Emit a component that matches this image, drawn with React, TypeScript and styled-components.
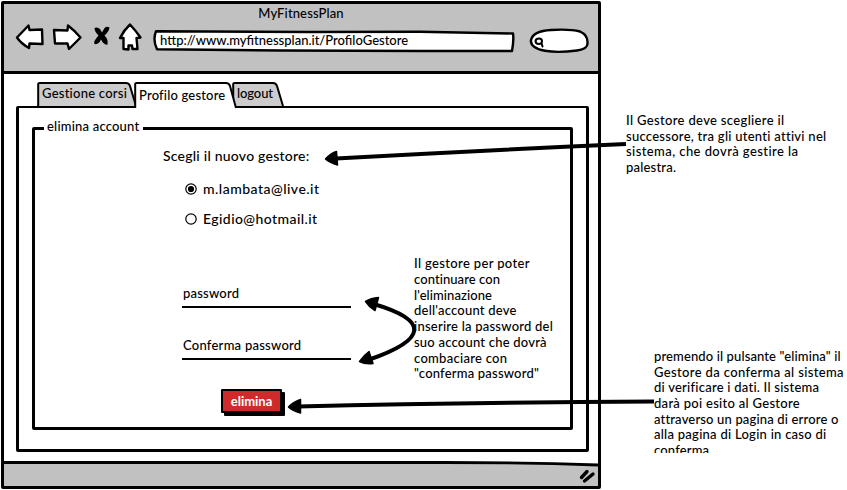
import React from "react";
import styled, { createGlobalStyle } from "styled-components";

const GlobalStyle = createGlobalStyle`
  * { box-sizing: border-box; }
  body { margin: 0; background: #fff; color: #000; font-family: Lato, "Open Sans", sans-serif; }
`;

const Page = styled.div`
  position: relative;
  display: flex;
  width: 847px;
  height: 490px;
  overflow: hidden;
`;

const Text = styled.span<{ $track?: number; $size?: number }>`
  display: block;
  white-space: nowrap;
  font-size: ${(p) => p.$size ?? 13}px;
  font-weight: 500;
  line-height: 16px;
  letter-spacing: ${(p) => p.$track ?? 0}px;
`;

const BrowserWindow = styled.main`
  display: flex;
  flex-direction: column;
  flex: none;
  width: 600px;
  height: 488px;
  margin: 1px 0 0 1px;
  border: 3px solid #000;
  border-radius: 2px;
`;

const Chrome = styled.header`
  flex: none;
  height: 70px;
  background: #c1c1c1;
  border-bottom: 3px solid #000;
`;

const TitleRow = styled.div`
  display: flex;
  justify-content: center;
  height: 18px;
  padding-top: 1px;
`;

const Toolbar = styled.div`
  display: flex;
  height: 36px;
  padding-left: 9px;
`;

const NavIcons = styled.svg`
  flex: none;
  width: 134px;
  height: 36px;
`;

const Shape = styled.svg`
  position: absolute;
  inset: 0;
  width: 100%;
  height: 100%;
  overflow: visible;
`;

const AddressBar = styled.div`
  position: relative;
  flex: none;
  width: 362px;
  height: 22px;
  margin-top: 8px;
  margin-left: 6px;
  padding: 2px 0 0 7px;
  > span { position: relative; }
`;

const SearchBox = styled.svg`
  flex: none;
  width: 62px;
  height: 27px;
  margin: 6px 0 0 13px;
`;

const Content = styled.div`
  flex: 1;
  display: flex;
  flex-direction: column;
  padding: 8px 9px 9px 12px;
`;

const TabRow = styled.nav`
  position: relative;
  z-index: 1;
  display: flex;
  flex: none;
  height: 24px;
  padding-left: 21px;
`;

const TabBox = styled.div<{ $width: number; $pad: number; $top: number; $overlap?: number; $active?: boolean }>`
  position: relative;
  z-index: ${(p) => (p.$active ? 2 : 1)};
  flex: none;
  width: ${(p) => p.$width}px;
  height: ${(p) => (p.$active ? 26 : 24)}px;
  margin-left: -${(p) => p.$overlap ?? 0}px;
  padding: ${(p) => p.$top}px 0 0 ${(p) => p.$pad}px;
  > span { position: relative; }
`;

const Panel = styled.section`
  flex: 1;
  border: solid #000;
  border-width: 2px 3px 3px 3px;
  border-radius: 2px;
  padding: 19px 13px 19px 13px;
`;

const Group = styled.section`
  position: relative;
  display: flex;
  height: 100%;
  border: solid #000;
  border-width: 3px 3px 3px 3px;
  border-radius: 2px;
`;

const Legend = styled.div`
  position: absolute;
  top: -12px;
  left: 9px;
  width: 99px;
  padding-left: 3px;
  background: #fff;
`;

const Form = styled.form`
  width: 379px;
  padding: 18px 0 0 128px;
`;

const Option = styled.label<{ $gap: number }>`
  display: flex;
  align-items: center;
  gap: 6px;
  height: 16px;
  margin: ${(p) => p.$gap}px 0 0 22px;
`;

const Radio = styled.svg`
  width: 12px;
  height: 12px;
`;

const Field = styled.div<{ $gap: number }>`
  width: 169px;
  height: 23px;
  margin: ${(p) => p.$gap}px 0 0 19px;
  padding-left: 1px;
  border-bottom: 2px solid #000;
`;

const DeleteButton = styled.button`
  display: flex;
  justify-content: center;
  align-items: center;
  width: 61px;
  height: 24px;
  margin: 29px 0 0 58px;
  padding: 0 0 1px;
  border: 2px solid #000;
  border-radius: 1px;
  background: #d02a2a;
  color: #fff;
  font-family: inherit;
  box-shadow: 3px 3px 0 #000;
  > span { font-weight: 700; }
`;

const Note = styled.div<{ $top: number; $left: number; $height?: number }>`
  flex: none;
  margin: ${(p) => p.$top}px 0 0 ${(p) => p.$left}px;
  height: ${(p) => (p.$height ? `${p.$height}px` : "auto")};
  overflow: hidden;
  > span { line-height: 15.7px; }
`;

const Margin = styled.aside`
  display: flex;
  flex-direction: column;
  width: 246px;
`;

const StatusBar = styled.footer`
  position: relative;
  display: flex;
  justify-content: flex-end;
  flex: none;
  height: 25px;
`;

const Grip = styled.svg`
  position: relative;
  width: 20px;
  height: 16px;
  margin-top: 7px;
`;

const Arrows = styled.svg`
  position: absolute;
  top: 0;
  left: 0;
  z-index: 3;
  pointer-events: none;
`;

type NoteLine = [text: string, track: number];

const successorNote: NoteLine[] = [
  ["Il Gestore deve scegliere il", 0.34],
  ["successore, tra gli utenti attivi nel", 0.27],
  ["sistema, che dovrà gestire la", 0.42],
  ["palestra.", 0.2],
];

const passwordNote: NoteLine[] = [
  ["Il gestore per poter", 0.35],
  ["continuare con", 0.07],
  ["l'eliminazione", 0.07],
  ["dell'account deve", 0.22],
  ["inserire la password del", 0.23],
  ["suo account che dovrà", 0.22],
  ["combaciare con", 0.28],
  ['"conferma password"', 0.2],
];

const deleteNote: NoteLine[] = [
  ['premendo il pulsante "elimina" il', 0.12],
  ["Gestore da conferma al sistema", 0.36],
  ["di verificare i dati. Il sistema", 0.24],
  ["darà poi esito al Gestore", 0.29],
  ["attraverso un pagina di errore o", 0.16],
  ["alla pagina di Login in caso di", 0.26],
  ["conferma", 0.16],
];

const Lines = ({ lines }: { lines: NoteLine[] }) => (
  <>
    {lines.map(([text, track]) => (
      <Text key={text} $track={track}>{text}</Text>
    ))}
  </>
);

const Tab = ({ label, width, pad, top, track, overlap, active }: {
  label: string; width: number; pad: number; top: number; track: number; overlap?: number; active?: boolean;
}) => (
  <TabBox $width={width} $pad={pad} $top={top} $overlap={overlap} $active={active}>
    <Shape>
      <path
        d={`M1.2 ${active ? 26 : 24} L1.2 2 Q1.2 1 3 1 L${width - 11} 1 Q${width - 8} 1 ${width - 7} 4 L${width - 1} ${active ? 26 : 24}`}
        fill={active ? "#fff" : "#ccc"}
        stroke="#000"
        strokeWidth="2"
      />
    </Shape>
    <Text $track={track}>{label}</Text>
  </TabBox>
);

export default function App() {
  return (
    <Page>
      <GlobalStyle />
      <BrowserWindow>
        <Chrome>
          <TitleRow><Text $track={0.13}>MyFitnessPlan</Text></TitleRow>
          <Toolbar>
            <NavIcons viewBox="13 22 134 36" stroke="#000" strokeWidth="2.4" strokeLinejoin="round" strokeLinecap="round" fill="#fff">
              <path d="M17 37.5 L28.5 25.5 L29.5 30 L42 29.5 L42.5 44 L29.5 43.5 L29 48 Q21 43.500 17 37.500Z" />
              <path d="M54 30 L67.500 30.500 L68 25.500 Q74 30 80.500 37.500 L69 49 L67.500 43.500 L55 43.500Z" />
              <path d="M94.500 28 Q97.500 26.500 100 29 L102 32.500 L104.500 28 Q107 26 109.500 27.500 Q109 31.500 104.500 35.500 Q108.500 39.500 107.500 44.500 Q104 45.500 101 39.500 Q98.500 45 94.500 44 Q93 41.500 98.500 35.500 Q94.500 31.500 94.500 28Z" fill="#000" stroke="none" />
              <path d="M130 24.500 Q136 31 140.500 37.500 L136.500 38 L137.500 49 L132.500 49 L132 45.500 L128.500 45.500 L128.500 49.500 L123.500 49 L123.500 38 L120 38 Q124 30 130 24.500Z" />
            </NavIcons>
            <AddressBar>
              <Shape viewBox="153 30 362 22">
                <path d="M156 31.300 L310 32 L420 31.800 L513 33.500 Q514 40 512 51 L420 51 L280 50.500 L157 49.300 Q152.500 40 156 31.300Z" fill="#fff" stroke="#000" strokeWidth="2.4" strokeLinejoin="round" />
              </Shape>
              <Text>http://www.myfitnessplan.it/ProfiloGestore</Text>
            </AddressBar>
            <SearchBox viewBox="528 28 62 27" fill="none" stroke="#000" strokeLinecap="round">
              <path d="M531 40 Q533 31 551 30 Q570 28.800 580 31.500 Q588 35 587.500 43 Q588 49 577 50.500 Q558 53 545 50.800 Q530 48 531 40Z" fill="#fff" strokeWidth="2.4" />
              <path d="M542 41 Q542 44 539 44 Q535.500 44 535.500 41 Q536 38.500 539 38.500 Q542 38.500 542 41 M541.500 43 L542.500 46.500" strokeWidth="2" />
            </SearchBox>
          </Toolbar>
        </Chrome>
        <Content>
          <TabRow>
            <Tab label="Gestione corsi" width={100} pad={5} top={3} track={0.24} />
            <Tab label="Profilo gestore" width={103} pad={5} top={5} track={0.18} overlap={3} active />
            <Tab label="logout" width={52} pad={5} top={3} track={-0.1} overlap={5} />
          </TabRow>
          <Panel>
            <Group>
              <Legend><Text $track={0.2}>elimina account</Text></Legend>
              <Form>
                <Text $track={0.23} $size={14}>Scegli il nuovo gestore:</Text>
                <Option $gap={17}>
                  <Radio viewBox="0 0 12 12"><circle cx="6" cy="6" r="5.200" fill="#fff" stroke="#000" strokeWidth="1.200" /><circle cx="6" cy="6" r="3.100" /></Radio>
                  <Text $track={0.48} $size={14}>m.lambata@live.it</Text>
                </Option>
                <Option $gap={14}>
                  <Radio viewBox="0 0 12 12"><circle cx="6" cy="6" r="5.200" fill="#fff" stroke="#000" strokeWidth="1.200" /></Radio>
                  <Text $track={0.42} $size={14}>Egidio@hotmail.it</Text>
                </Option>
                <Field $gap={58}><Text $track={0.22}>password</Text></Field>
                <Field $gap={29}><Text $track={0.25}>Conferma password</Text></Field>
                <DeleteButton type="button"><Text $track={0}>elimina</Text></DeleteButton>
              </Form>
              <Note $top={126.3} $left={0}><Lines lines={passwordNote} /></Note>
            </Group>
          </Panel>
        </Content>
        <StatusBar>
          <Shape viewBox="0 0 594 25" preserveAspectRatio="none">
            <path d="M0 1.500 L260 1.500 L440 1.500 Q520 1.500 594 4 V25 H0Z" fill="#c1c1c1" />
            <path d="M0 1.500 L260 1.500 L440 1.500 Q520 1.500 594 4" fill="none" stroke="#000" strokeWidth="2.800" />
          </Shape>
          <Grip viewBox="579 469 20 16" stroke="#000" strokeWidth="3.400" strokeLinecap="round">
            <path d="M582.500 478.500 L588 472.500 M585.500 482 L594 475" />
          </Grip>
        </StatusBar>
      </BrowserWindow>
      <Margin>
        <Note $top={113} $left={25}><Lines lines={successorNote} /></Note>
        <Note $top={173} $left={53} $height={104}><Lines lines={deleteNote} /></Note>
      </Margin>
      <Arrows width="847" height="490" fill="none" stroke="#000" strokeWidth="4" strokeLinejoin="round">
        <path d="M336 158.500 Q480 150.500 626 144" />
        <path d="M372 303.500 C429 320 429 339 368 360" />
        <path d="M298 406.500 Q470 402.500 654 401.500" />
        <g fill="#000" strokeWidth="1.500">
          <path d="M325.500 159 Q331 153 336.500 151.500 L337.500 165 Q330 163 325.500 159Z" />
          <path d="M365.500 301.500 Q371 298 378.500 297.500 L375 310.500 Q369 307 365.500 301.500Z" />
          <path d="M359.500 361.500 Q364 355 369 351.500 L373 363.500 Q365 364.500 359.500 361.500Z" />
          <path d="M288.500 407 Q293 402 300.500 399.500 L300.500 413 Q292.500 411 288.500 407Z" />
        </g>
      </Arrows>
    </Page>
  );
}
